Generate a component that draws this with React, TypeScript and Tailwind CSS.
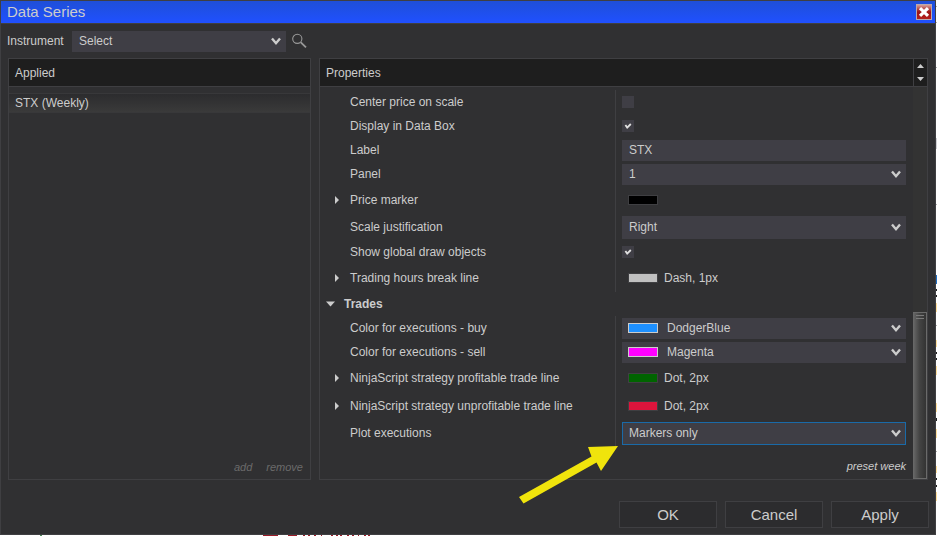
import { useState } from 'react';
import type { ReactNode } from 'react';

const INPUT = 'bg-[#3f3e45] text-xs text-[#cccccc] outline-none';

function Chevron() {
  return (
    <svg
      className="pointer-events-none absolute right-1 top-1/2 h-2.5 w-3 -translate-y-1/2"
      viewBox="0 0 12 10"
      fill="none"
      stroke="#cccccc"
      strokeWidth="2.4"
    >
      <path d="M2 2.5 L6 7.2 L10 2.5" />
    </svg>
  );
}

function Swatch({ color, bright }: { color: string; bright?: boolean }) {
  return (
    <span
      className={`h-2.5 w-[30px] shrink-0 border ${bright ? 'border-[#cccccc]' : 'border-[#3f3f42]'}`}
      style={{ backgroundColor: color }}
    />
  );
}

type SelectProps = {
  id: string;
  options: string[];
  color?: string;
  focused?: boolean;
  tall?: boolean;
};

function Select({ id, options, color, focused, tall }: SelectProps) {
  return (
    <div className="relative flex flex-1 items-center">
      {color && (
        <span className="pointer-events-none absolute left-1.5 flex">
          <Swatch color={color} bright />
        </span>
      )}
      <select
        id={id}
        className={`w-full appearance-none border ${INPUT} ${tall ? 'h-[23px]' : 'h-[21px]'} ${
          color ? 'pl-11' : 'pl-1.5'
        } ${focused ? 'border-[#1a6aa8]' : 'border-[#3f3e45]'}`}
      >
        {options.map((option) => (
          <option key={option}>{option}</option>
        ))}
      </select>
      <Chevron />
    </div>
  );
}

function Check({ id, initial }: { id: string; initial: boolean }) {
  const [checked, setChecked] = useState(initial);

  return (
    <span className="relative flex h-3 w-3">
      <input
        id={id}
        type="checkbox"
        checked={checked}
        onChange={() => setChecked(!checked)}
        className="h-3 w-3 appearance-none bg-[#3f3e45]"
      />
      {checked && (
        <svg
          className="pointer-events-none absolute inset-0"
          viewBox="0 0 12 12"
          fill="none"
          stroke="#e0e0e0"
          strokeWidth="1.8"
        >
          <path d="M3.4 5 L5.2 7.6 L8.8 4" />
        </svg>
      )}
    </span>
  );
}

type RowProps = {
  label: string;
  height: string;
  htmlFor?: string;
  children: ReactNode;
};

function Row({ label, height, htmlFor, children }: RowProps) {
  return (
    <div className={`flex ${height}`}>
      <div className="flex flex-1 items-center border-r border-[#3f3f42]">
        {htmlFor ? (
          <label htmlFor={htmlFor} className="pl-[30px]">
            {label}
          </label>
        ) : (
          <button type="button" className="flex items-center text-left">
            <svg className="h-2 w-[30px]" viewBox="0 0 30 8" fill="#cccccc">
              <path d="M15 0 L19 4 L15 8 Z" />
            </svg>
            {label}
          </button>
        )}
      </div>
      <div className="flex w-[290px] items-center pl-1.5">{children}</div>
    </div>
  );
}

function Stroke({ color, text }: { color: string; text?: string }) {
  return (
    <span className="flex items-center gap-1.5 pl-1.5">
      <Swatch color={color} />
      {text}
    </span>
  );
}

function PropertyList() {
  return (
    <div className="min-w-0 flex-1 pr-[7px] pt-[3px]">
      <Row label="Center price on scale" height="h-6" htmlFor="center">
        <Check id="center" initial={false} />
      </Row>
      <Row label="Display in Data Box" height="h-6" htmlFor="databox">
        <Check id="databox" initial />
      </Row>
      <Row label="Label" height="h-6" htmlFor="label">
        <input
          id="label"
          defaultValue="STX"
          className={`h-[21px] min-w-0 flex-1 px-[7px] ${INPUT}`}
        />
      </Row>
      <Row label="Panel" height="h-6" htmlFor="panel">
        <Select id="panel" options={['1', '2']} />
      </Row>
      <Row label="Price marker" height="h-7">
        <Stroke color="#000000" />
      </Row>
      <Row label="Scale justification" height="h-[26px]" htmlFor="scale">
        <Select id="scale" options={['Right', 'Left', 'Overlay']} tall />
      </Row>
      <Row label="Show global draw objects" height="h-6" htmlFor="global">
        <Check id="global" initial />
      </Row>
      <Row label="Trading hours break line" height="h-7">
        <Stroke color="#c0c0c0" text="Dash, 1px" />
      </Row>
      <button type="button" className="flex h-6 items-center font-bold">
        <svg className="h-2 w-6" viewBox="0 0 24 8" fill="#cccccc">
          <path d="M6 1.5 H15 L10.5 6.5 Z" />
        </svg>
        Trades
      </button>
      <Row label="Color for executions - buy" height="h-6" htmlFor="buy">
        <Select id="buy" options={['DodgerBlue']} color="#1e90ff" />
      </Row>
      <Row label="Color for executions - sell" height="h-6" htmlFor="sell">
        <Select id="sell" options={['Magenta']} color="#ff00ff" />
      </Row>
      <Row label="NinjaScript strategy profitable trade line" height="h-7">
        <Stroke color="#006400" text="Dot, 2px" />
      </Row>
      <Row label="NinjaScript strategy unprofitable trade line" height="h-7">
        <Stroke color="#dc143c" text="Dot, 2px" />
      </Row>
      <Row label="Plot executions" height="h-[26px]" htmlFor="plot">
        <Select
          id="plot"
          options={['Markers only', 'Text and markers', 'Do not plot']}
          tall
          focused
        />
      </Row>
      <div className="flex justify-end pt-3">
        <button type="button" className="text-[11px] italic leading-4">
          preset week
        </button>
      </div>
    </div>
  );
}

function Scrollbar() {
  return (
    <div className="flex w-3.5 flex-col bg-[#333333] pt-[225px]">
      <div className="flex-1 border border-l-0 border-[#6a6a6a] bg-linear-to-r from-[#6a6a6a] via-[#444444] to-[#333333]">
        <svg className="h-2 w-3.5" viewBox="0 0 14 8" stroke="#7a7a7a">
          <path d="M3 2.5 H11 M3 5.5 H11" />
        </svg>
      </div>
    </div>
  );
}

function TitleBar() {
  return (
    <header className="flex h-[23px] items-center justify-between border-b border-[#3f3f42] bg-linear-to-b from-[#1f4fd8] to-[#2050ff] pl-1.5 pr-[3px]">
      <h1 className="text-[15px] leading-5">Data Series</h1>
      <button type="button" aria-label="Close">
        <svg className="h-4 w-4" viewBox="0 0 16 16">
          <defs>
            <linearGradient id="close" x1="0" y1="0" x2="0" y2="1">
              <stop offset="0" stopColor="#d8a8a4" />
              <stop offset="0.35" stopColor="#b03c38" />
              <stop offset="0.5" stopColor="#9c1414" />
              <stop offset="1" stopColor="#b8201c" />
            </linearGradient>
          </defs>
          <rect x="0.5" y="0.5" width="15" height="15" fill="url(#close)" stroke="#b9a9ae" />
          <path d="M4 4.2 L12 11.8 M12 4.2 L4 11.8" stroke="#ffffff" strokeWidth="3.2" />
        </svg>
      </button>
    </header>
  );
}

// slivers of the chart behind the dialog
function Backdrop() {
  return (
    <>
      <svg
        className="pointer-events-none absolute right-0 top-0 h-[536px] w-px"
        viewBox="0 0 1 536"
        shapeRendering="crispEdges"
      >
        <path d="M0 138h1v11H0z" fill="#d0d0d4" />
        <path d="M0 6h1v1H0zM0 22h1v1H0zM0 67h1v1H0zM0 204h1v1H0zM0 325h1v1H0zM0 451h1v1H0z" fill="#b0b0b0" />
        <path d="M0 275h1v9H0z" fill="#1f6fc4" />
        <path d="M0 303h1v9H0zM0 340h1v7H0zM0 366h1v9H0zM0 403h1v9H0zM0 429h1v9H0zM0 466h1v7H0zM0 492h1v9H0z" fill="#ffdf9c" />
        <path d="M0 289h1v2H0zM0 295h1v2H0zM0 352h1v2H0zM0 358h1v2H0zM0 418h1v3H0zM0 478h1v2H0zM0 485h1v2H0z" fill="#202020" />
      </svg>
      <svg
        className="pointer-events-none absolute bottom-0 left-0 h-px w-[400px]"
        viewBox="0 0 400 1"
        shapeRendering="crispEdges"
      >
        <path d="M40 0h2v1h-2z" fill="#4f8a5c" />
        <path
          d="M263 0h15v1h-15zM288 0h9v1h-9zM303 0h2v1h-2zM308 0h2v1h-2zM314 0h2v1h-2zM321 0h1v1h-1zM331 0h2v1h-2zM336 0h2v1h-2zM340 0h2v1h-2zM347 0h2v1h-2zM352 0h2v1h-2zM358 0h1v1h-1zM364 0h2v1h-2zM368 0h2v1h-2z"
          fill="#9c1c28"
        />
      </svg>
    </>
  );
}

export default function App() {
  return (
    <div className="relative flex min-h-screen flex-col bg-white pb-px pr-px font-['Liberation_Sans',Arial,sans-serif] text-xs text-[#cccccc]">
      <Backdrop />
      <div className="flex flex-1 flex-col border border-[#3f3f42] bg-[#303032]">
        <TitleBar />
        <div className="flex h-[34px] items-center pl-1.5">
          <label htmlFor="instrument" className="w-[65px]">
            Instrument
          </label>
          <div className="flex w-[214px]">
            <Select id="instrument" options={['Select']} />
          </div>
          <button type="button" aria-label="Search" className="ml-1.5">
            <svg className="h-4 w-4" viewBox="0 0 16 16" fill="none" stroke="#999999">
              <circle cx="5.3" cy="5.8" r="4.6" strokeWidth="1.1" />
              <path d="M8.8 9.3 L14 14.4" strokeWidth="1.8" />
            </svg>
          </button>
        </div>
        <main className="grid flex-1 grid-cols-[303fr_609fr] gap-2 px-[7px]">
          <section className="flex flex-col border border-[#3f3f42]">
            <h2 className="flex h-7 items-center border-b border-[#3f3f42] bg-[#1e1e1e] px-1.5">
              Applied
            </h2>
            <button
              type="button"
              className="mt-1.5 h-5 border-y border-[#38383a] bg-linear-to-b from-[#2c2c2e] to-[#3a3a3a] px-1.5 text-left"
            >
              STX (Weekly)
            </button>
            <div className="mt-auto flex justify-end gap-3.5 px-[7px] pb-1 text-[11px] italic leading-4 text-[#6b6b6b]">
              <button type="button">add</button>
              <button type="button">remove</button>
            </div>
          </section>
          <section className="flex flex-col border border-[#3f3f42]">
            <div className="flex h-7 border-b border-[#3f3f42] bg-[#1e1e1e]">
              <h2 className="flex flex-1 items-center px-1.5">Properties</h2>
              <div className="flex w-3.5 flex-col items-center justify-around border-l border-[#3f3f42]">
                <button type="button" aria-label="Scroll up">
                  <svg className="block h-1 w-[7px]" viewBox="0 0 7 4" fill="#cccccc">
                    <path d="M0 4 L3.5 0 L7 4 Z" />
                  </svg>
                </button>
                <button type="button" aria-label="Scroll down">
                  <svg className="block h-1 w-[7px]" viewBox="0 0 7 4" fill="#cccccc">
                    <path d="M0 0 H7 L3.5 4 Z" />
                  </svg>
                </button>
              </div>
            </div>
            <div className="flex flex-1">
              <PropertyList />
              <Scrollbar />
            </div>
          </section>
        </main>
        <footer className="flex justify-end gap-2 px-1.5 pb-1.5 pt-[21px]">
          {['OK', 'Cancel', 'Apply'].map((name) => (
            <button
              key={name}
              type="button"
              className="h-[27px] w-[98px] border border-[#3f3f42] bg-[#2c2c2e] text-[15px]"
            >
              {name}
            </button>
          ))}
        </footer>
      </div>
      <svg
        className="pointer-events-none absolute left-[519px] top-[445px] h-[59px] w-[99px]"
        viewBox="0 0 99 59"
        fill="#f0e40c"
      >
        <path d="M0 52 L72.5 11.5 L69 2 L99 1 L82 26 L77.5 17.5 L4.5 58.5 Z" />
      </svg>
    </div>
  );
}
